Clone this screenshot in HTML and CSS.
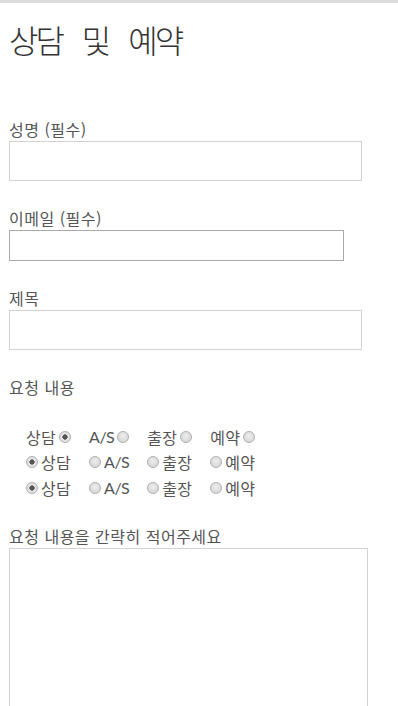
FILE: index.html
```html
<!DOCTYPE html>
<html lang="ko">
<head>
<meta charset="utf-8">
<title>상담 및 예약</title>
<link rel="stylesheet" href="styles.css">
</head>
<body>
<div class="topbar"></div>
<main class="page">
  <h1 class="title">상담 및 예약</h1>
  <form class="form">
    <div class="field">
      <label class="label" for="name">성명 (필수)</label>
      <input class="input" id="name" type="text">
    </div>
    <div class="field">
      <label class="label" for="email">이메일 (필수)</label>
      <input class="input input-plain" id="email" type="email">
    </div>
    <div class="field">
      <label class="label" for="subject">제목</label>
      <input class="input" id="subject" type="text">
    </div>
    <div class="field field-radios">
      <div class="label">요청 내용</div>
      <div class="radios">
        <div class="radio-row">
          <label class="opt">상담<input class="radio" type="radio" name="r1" checked></label>
          <label class="opt"><span class="latin">A/S</span><input class="radio" type="radio" name="r1"></label>
          <label class="opt">출장<input class="radio" type="radio" name="r1"></label>
          <label class="opt">예약<input class="radio" type="radio" name="r1"></label>
        </div>
        <div class="radio-row">
          <label class="opt"><input class="radio" type="radio" name="r2" checked>상담</label>
          <label class="opt"><input class="radio" type="radio" name="r2"><span class="latin">A/S</span></label>
          <label class="opt"><input class="radio" type="radio" name="r2">출장</label>
          <label class="opt"><input class="radio" type="radio" name="r2">예약</label>
        </div>
        <div class="radio-row">
          <label class="opt"><input class="radio" type="radio" name="r3" checked>상담</label>
          <label class="opt"><input class="radio" type="radio" name="r3"><span class="latin">A/S</span></label>
          <label class="opt"><input class="radio" type="radio" name="r3">출장</label>
          <label class="opt"><input class="radio" type="radio" name="r3">예약</label>
        </div>
      </div>
    </div>
    <div class="field">
      <label class="label" for="msg">요청 내용을 간략히 적어주세요</label>
      <textarea class="textarea" id="msg"></textarea>
    </div>
  </form>
</main>
</body>
</html>
```
FILE: styles.css
```css
html, body {
  margin: 0;
  padding: 0;
  background: #fff;
}
body {
  font-family: "Noto Sans CJK KR", "Noto Sans", sans-serif;
  color: #555;
}
.topbar {
  height: 3px;
  background: #dcdcdc;
}
.page {
  padding: 0 9px;
}
.title {
  margin: 0;
  padding-top: 14px;
  font-size: 32px;
  line-height: 44px;
  font-weight: 300;
  color: #333;
  letter-spacing: -3px;
  word-spacing: 14px;
}
.form {
  margin-top: 59px;
}
.field {
  margin-bottom: 28px;
}
.field-radios {
  margin-bottom: 28px;
}
.label {
  display: block;
  font-size: 16px;
  line-height: 19px;
  padding-bottom: 2px;
  letter-spacing: 0.5px;
  color: #555;
}
.input {
  display: block;
  box-sizing: border-box;
  width: 353px;
  height: 40px;
  margin: 0;
  border: 1px solid #d2d2d2;
  background: #fff;
  padding: 0 8px;
  outline: none;
}
.input-plain {
  width: 335px;
  height: 31px;
  border: 1px solid #a9a9a9;
}
.radios {
  padding: 27px 0 0 17px;
  display: flex;
  flex-direction: column;
  gap: 4px;
}
.radio-row {
  display: flex;
  gap: 18px;
  height: 21.5px;
  align-items: center;
}
.opt {
  display: flex;
  align-items: center;
  gap: 3px;
  font-size: 16px;
  line-height: 22px;
  letter-spacing: 0.3px;
  color: #555;
}
.latin {
  font-family: Lato, "Noto Sans", sans-serif;
  letter-spacing: -0.5px;
}
.radio {
  appearance: none;
  -webkit-appearance: none;
  margin: 0;
  width: 12px;
  height: 12px;
  border-radius: 50%;
  border: 1px solid #b0b0b0;
  background: radial-gradient(circle at 50% 40%, #eeeeee 0, #d0d0d0 100%);
  box-sizing: border-box;
}
.radio:checked {
  background: radial-gradient(circle, #555 0, #555 2.4px, #e8e8e8 2.9px, #d4d4d4 100%);
}
.textarea {
  display: block;
  box-sizing: border-box;
  width: 359px;
  height: 260px;
  margin: 0;
  border: 1px solid #d2d2d2;
  resize: none;
  outline: none;
}
```
